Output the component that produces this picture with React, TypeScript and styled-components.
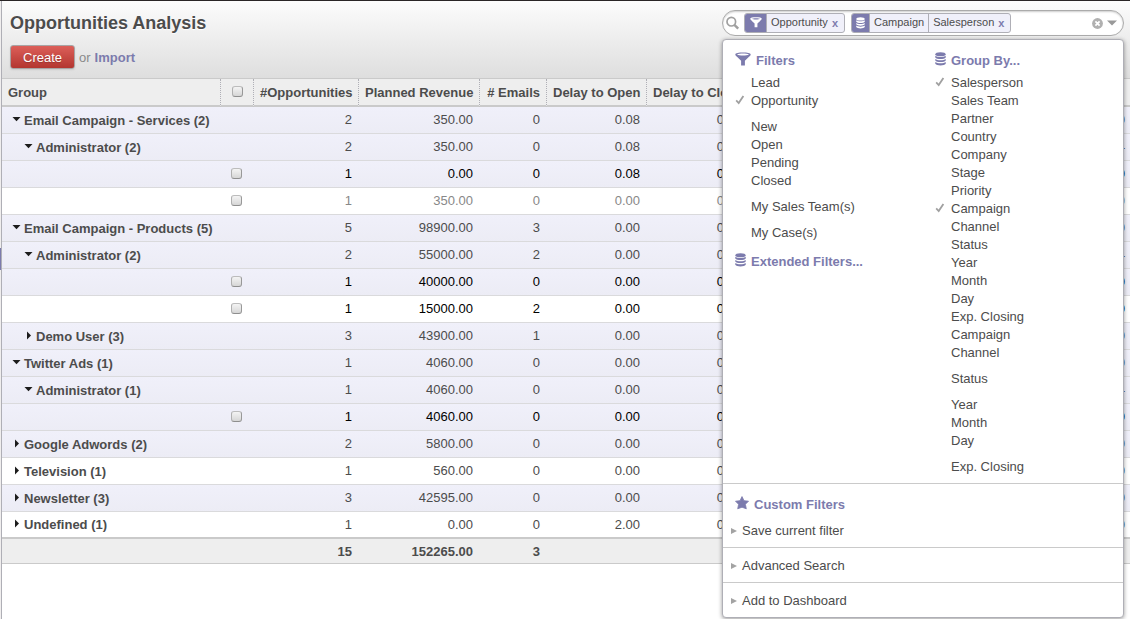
import React from "react";
import styled, { createGlobalStyle, css } from "styled-components";

const PURPLE = "#7c7bad";
const TEXT = "#4c4c4c";

const GlobalStyle = createGlobalStyle`
  *, *::before, *::after { box-sizing: border-box; }
  body {
    margin: 0;
    background: #fff;
    color: ${TEXT};
    font-family: "Liberation Sans", Arial, sans-serif;
    font-size: 13px;
    line-height: 18px;
  }
  button, input { font: inherit; color: inherit; }
  ul { list-style: none; margin: 0; padding: 0; }
`;

const Page = styled.div`
  display: flex;
  min-height: 100vh;
  border-top: 1px solid #2a2526;
`;

const Rail = styled.div`
  flex: none;
  width: 2px;
  padding-top: 247px;
  background: #f0eeee;
  border-right: 1px solid #afafb6;
`;

const RailMarker = styled.div`
  height: 22px;
  background: ${PURPLE};
`;

const Main = styled.main`
  flex: 1;
  min-width: 0;
`;

const Header = styled.header`
  display: flex;
  justify-content: space-between;
  height: 78px;
  padding: 0 6px 0 8px;
  background: linear-gradient(#fcfcfc, #dedede);
  border-bottom: 1px solid #cacaca;
`;

const Title = styled.h1`
  margin: 0;
  padding-top: 10px;
  font-size: 18px;
  line-height: 24px;
  text-shadow: 0 1px 1px #fff;
`;

const Actions = styled.div`
  display: flex;
  align-items: baseline;
  gap: 4px;
  margin-top: 10px;
  color: #8a8a8a;
`;

const CreateButton = styled.button`
  height: 24px;
  padding: 2px 12px 0;
  border: 1px solid #a8a4a4;
  border-radius: 3px;
  background: linear-gradient(#dc5f59, #b33630);
  box-shadow: 0 1px 2px rgba(0, 0, 0, 0.1);
  color: #fff;
  text-shadow: 0 1px 1px rgba(0, 0, 0, 0.2);
`;

const ImportLink = styled.a`
  color: ${PURPLE};
  font-weight: bold;
  text-decoration: none;
`;

const Search = styled.div`
  position: relative;
  width: 402px;
  padding-top: 9px;
`;

const SearchBox = styled.div`
  display: flex;
  align-items: center;
  height: 26px;
  padding: 0 6px 0 3px;
  border: 1px solid #ababab;
  border-radius: 13px;
  background: #fff;
  box-shadow: 0 1px 2px rgba(0, 0, 0, 0.2) inset;
`;

const Facet = styled.div`
  display: flex;
  height: 20px;
  margin-left: 6px;
  border: 1px solid #afafb6;
  border-radius: 3px;
  background: #f0f0fa;
  overflow: hidden;
  font-size: 11px;
  line-height: 17px;
`;

const FacetIcon = styled.span<{ $wide?: boolean }>`
  display: flex;
  align-items: center;
  justify-content: center;
  width: ${(p) => (p.$wide ? 21 : 17)}px;
  background: ${PURPLE};
  color: #fff;
`;

const FacetValue = styled.span`
  padding: 0 4px;
  border-left: 1px solid #afafb6;
`;

const FacetRemove = styled.button`
  padding: 0 6px 0 0;
  border: 0;
  background: none;
  color: ${PURPLE};
  font-weight: bold;
  line-height: 17px;
`;

const SearchInput = styled.input`
  flex: 1;
  min-width: 0;
  height: 20px;
  padding: 0 4px;
  border: 0;
  outline: 0;
  background: none;
`;

const IconButton = styled.button`
  display: flex;
  padding: 0;
  margin-left: 4px;
  border: 0;
  background: none;
`;

const Menu = styled.div`
  position: absolute;
  top: 38px;
  left: 0;
  right: 0;
  z-index: 2;
  border: 1px solid #afafb6;
  border-radius: 4px;
  background: #fff;
  box-shadow: 0 1px 4px rgba(0, 0, 0, 0.4);
`;

const MenuColumns = styled.div`
  display: grid;
  grid-template-columns: 1fr 1fr;
  padding: 12px 0 7px;
`;

const MenuColumn = styled.div`
  padding-left: 12px;
`;

const MenuTitle = styled.h3<{ $top?: number }>`
  display: flex;
  gap: 5px;
  margin: ${(p) => p.$top ?? 0}px 0 0;
  color: ${PURPLE};
  font-size: 13px;
  line-height: 18px;
`;

const MenuGroup = styled.ul<{ $first?: boolean }>`
  margin-top: ${(p) => (p.$first ? 4 : 8)}px;
`;

const MenuItem = styled.button`
  display: grid;
  grid-template-columns: 16px auto;
  align-items: center;
  padding: 0;
  border: 0;
  background: none;
  line-height: 18px;
  text-align: left;
`;

const MenuSection = styled.section`
  padding: 9px 0 7px 8px;
  border-top: 1px solid #cacaca;
`;

const CustomTitle = styled(MenuTitle)`
  margin: 3px 0 8px 4px;
`;

const Expander = styled.button`
  display: flex;
  align-items: center;
  gap: 5px;
  padding: 0;
  border: 0;
  background: none;
  line-height: 18px;

  &::before {
    content: "";
    border-left: 6px solid #a3a3a3;
    border-top: 3px solid transparent;
    border-bottom: 3px solid transparent;
  }
`;

const Table = styled.table`
  width: 100%;
  table-layout: fixed;
  border-spacing: 0;
`;

const Col = styled.col<{ $w?: number }>`
  width: ${(p) => (p.$w ? `${p.$w}px` : "auto")};
`;

const HeadCell = styled.th<{ $align?: string }>`
  height: 28px;
  padding: 2px 6px 0;
  border-bottom: 2px solid #cacaca;
  background: #eee;
  text-align: ${(p) => p.$align ?? "left"};
  white-space: nowrap;
  overflow: hidden;

  & + & { border-left: 1px dotted #afafb6; }
`;

type Tone = "normal" | "strong" | "muted";
const tones: Record<Tone, string> = { normal: TEXT, strong: "#000", muted: "#888" };

const Row = styled.tr<{ $tone: Tone; $plain?: boolean }>`
  color: ${(p) => tones[p.$tone]};
  background: ${(p) => (p.$plain ? "#fff" : "linear-gradient(#f0f0fa, #ececf5)")};

  &:last-child > * { height: 25px; border-bottom: 0; }
`;

const cell = css`
  height: 27px;
  border-bottom: 1px solid #dadadc;
  vertical-align: middle;
`;

const GroupCell = styled.th<{ $level: number }>`
  ${cell}
  padding: 1px 0 0 ${(p) => 10 + p.$level * 12}px;
  text-align: left;
`;

const GroupToggle = styled.button`
  display: flex;
  align-items: center;
  gap: 3px;
  padding: 0;
  border: 0;
  background: none;
  font-weight: bold;
  line-height: 18px;
`;

const CheckCell = styled.td`
  ${cell}
  padding: 0 0 2px;
`;

const Checkbox = styled.input.attrs({ type: "checkbox" })`
  appearance: none;
  display: block;
  width: 11px;
  height: 11px;
  margin: 0 auto;
  border: 1px solid #999;
  border-color: #bcbcbc #989898 #8e8e8e #b0b0b0;
  border-radius: 3px;
  background: linear-gradient(#f4f4f4, #d6d6d6);
`;

const HeadCheckbox = styled(Checkbox)`
  margin-bottom: 3px;
`;

const NumCell = styled.td`
  ${cell}
  padding: 0 6px;
  text-align: right;

  &:last-child { padding-right: 5px; }
`;

const FootCell = styled.td`
  height: 27px;
  padding: 2px 6px 0;
  border-top: 2px solid #cacaca;
  border-bottom: 1px solid #cacaca;
  background: #eee;
  font-weight: bold;
  text-align: right;
`;

const FunnelIcon = ({ size = 16 }: { size?: number }) => (
  <svg width={size} height={size} viewBox="0 0 16 16" aria-hidden="true">
    <path
      fill="currentColor"
      fillRule="evenodd"
      d="M.3 2.4C.3 1 4 .4 8 .4s7.700.6 7.700 2c0 1-1.200 1.800-2.200 2.800L9.900 8.800V13.600H6.100V8.800L2.500 5.200C1.500 4.200.3 3.400.3 2.400ZM2 2.400c1.200.7 3.400 1 6 1s4.800-.3 6-1c-1.200-.6-3.400-.9-6-.9s-4.800.3-6 .9Z"
    />
  </svg>
);

const StackIcon = ({ width = 11, height = 14 }: { width?: number; height?: number }) => (
  <svg width={width} height={height} viewBox="0 0 12 14" preserveAspectRatio="none" aria-hidden="true">
    <g fill="currentColor">
      <ellipse cx="6" cy="2.200" rx="5.600" ry="2" />
      <path d="M.3 3.700C2.400 5.400 9.600 5.400 11.700 3.700V5.500C10.200 7.500 1.800 7.500.3 5.500Z" />
      <path d="M.3 6.900C2.400 8.600 9.600 8.600 11.700 6.900V8.600C10.200 10.600 1.800 10.600.3 8.600Z" />
      <path d="M.3 10C2.400 11.700 9.600 11.700 11.700 10V11.800C10.200 14 1.800 14 .3 11.800Z" />
    </g>
  </svg>
);

const StarIcon = () => (
  <svg width="14" height="14" viewBox="0 0 14 14" aria-hidden="true">
    <path
      d="M7 .6 9 4.700 13.500 5.200 10.400 8.300 11.300 12.800 7 11.200 2.700 12.800 3.600 8.300.5 5.200 5 4.700Z"
      fill="currentColor"
      stroke="currentColor"
      strokeWidth=".8"
      strokeLinejoin="round"
    />
  </svg>
);

const CheckIcon = () => (
  <svg width="10" height="10" viewBox="0 0 10 10" aria-hidden="true">
    <path d="M1.200 5.400 3.700 8 8.400 1" fill="none" stroke="#a0a0a0" strokeWidth="1.800" />
  </svg>
);

const LensIcon = () => (
  <svg width="12" height="14" viewBox="0 0 12 14" overflow="visible" aria-hidden="true">
    <circle cx="5.300" cy="5.700" r="4.300" fill="none" stroke="#a0a0a0" strokeWidth="1.700" />
    <path d="M8.400 8.800 12.200 12.700" stroke="#a0a0a0" strokeWidth="2.400" />
  </svg>
);

const ClearIcon = () => (
  <svg width="11" height="11" viewBox="0 0 11 11" aria-hidden="true">
    <circle cx="5.500" cy="5.500" r="5.400" fill="#b0b0b0" />
    <path d="M3.400 3.400 7.600 7.600M7.600 3.400 3.400 7.600" stroke="#fff" strokeWidth="1.700" />
  </svg>
);

const DropIcon = () => (
  <svg width="10" height="6" viewBox="0 0 10 6" aria-hidden="true">
    <path d="M0 .5H10L5 5.500Z" fill="#999" />
  </svg>
);

const ToggleIcon = ({ open }: { open: boolean }) => (
  <svg width="9" height="12" viewBox="0 0 9 12" aria-hidden="true">
    <path d={open ? "M.5 2H8.500L4.500 6.200Z" : "M3 .5 7 4.500 3 8.500Z"} fill="#1c1c1c" />
  </svg>
);

interface DataRow {
  label?: string;
  level?: number;
  open?: boolean;
  tone?: Tone;
  plain?: boolean;
  values: string[];
}

const rows: DataRow[] = [
  { label: "Email Campaign - Services (2)", open: true, values: ["2", "350.00", "0", "0.08", "0.00", "0.00"] },
  { label: "Administrator (2)", level: 1, open: true, values: ["2", "350.00", "0", "0.08", "0.00", "0.04"] },
  { tone: "strong", values: ["1", "0.00", "0", "0.08", "0.00", "0.00"] },
  { tone: "muted", plain: true, values: ["1", "350.00", "0", "0.00", "0.00", "0.00"] },
  { label: "Email Campaign - Products (5)", open: true, values: ["5", "98900.00", "3", "0.00", "0.00", "0.00"] },
  { label: "Administrator (2)", level: 1, open: true, values: ["2", "55000.00", "2", "0.00", "0.00", "0.04"] },
  { tone: "strong", values: ["1", "40000.00", "0", "0.00", "0.00", "0.00"] },
  { tone: "strong", plain: true, values: ["1", "15000.00", "2", "0.00", "0.00", "0.00"] },
  { label: "Demo User (3)", level: 1, values: ["3", "43900.00", "1", "0.00", "0.00", "0.00"] },
  { label: "Twitter Ads (1)", open: true, values: ["1", "4060.00", "0", "0.00", "0.00", "0.00"] },
  { label: "Administrator (1)", level: 1, open: true, values: ["1", "4060.00", "0", "0.00", "0.00", "0.04"] },
  { tone: "strong", values: ["1", "4060.00", "0", "0.00", "0.00", "0.00"] },
  { label: "Google Adwords (2)", values: ["2", "5800.00", "0", "0.00", "0.00", "0.00"] },
  { label: "Television (1)", plain: true, values: ["1", "560.00", "0", "0.00", "0.00", "0.00"] },
  { label: "Newsletter (3)", values: ["3", "42595.00", "0", "0.00", "0.00", "0.00"] },
  { label: "Undefined (1)", plain: true, values: ["1", "0.00", "0", "2.00", "0.00", "0.00"] },
];

const filterGroups = [["Lead", "Opportunity"], ["New", "Open", "Pending", "Closed"], ["My Sales Team(s)"], ["My Case(s)"]];

const groupByGroups = [
  [
    "Salesperson", "Sales Team", "Partner", "Country", "Company", "Stage", "Priority", "Campaign",
    "Channel", "Status", "Year", "Month", "Day", "Exp. Closing", "Campaign", "Channel",
  ],
  ["Status"],
  ["Year", "Month", "Day"],
  ["Exp. Closing"],
];

const MenuGroups = ({ groups, checked }: { groups: string[][]; checked: number[] }) => (
  <>
    {groups.map((items, g) => (
      <MenuGroup key={g} $first={g === 0}>
        {items.map((item, i) => {
          const on = g === 0 && checked.includes(i);
          return (
            <li key={i}>
              <MenuItem type="button" aria-pressed={on}>
                <span>{on && <CheckIcon />}</span>
                {item}
              </MenuItem>
            </li>
          );
        })}
      </MenuGroup>
    ))}
  </>
);

const SearchMenu = () => (
  <Menu>
    <MenuColumns>
      <MenuColumn>
        <MenuTitle><FunnelIcon />Filters</MenuTitle>
        <MenuGroups groups={filterGroups} checked={[1]} />
        <MenuTitle $top={11}><StackIcon />Extended Filters...</MenuTitle>
      </MenuColumn>
      <MenuColumn>
        <MenuTitle><StackIcon />Group By...</MenuTitle>
        <MenuGroups groups={groupByGroups} checked={[0, 7]} />
      </MenuColumn>
    </MenuColumns>
    <MenuSection>
      <CustomTitle><StarIcon />Custom Filters</CustomTitle>
      <Expander type="button">Save current filter</Expander>
    </MenuSection>
    <MenuSection><Expander type="button">Advanced Search</Expander></MenuSection>
    <MenuSection><Expander type="button">Add to Dashboard</Expander></MenuSection>
  </Menu>
);

export default function App() {
  return (
    <>
      <GlobalStyle />
      <Page>
        <Rail><RailMarker /></Rail>
        <Main>
          <Header>
            <div>
              <Title>Opportunities Analysis</Title>
              <Actions>
                <CreateButton type="button">Create</CreateButton>
                <span>or</span>
                <ImportLink href="#import">Import</ImportLink>
              </Actions>
            </div>
            <Search>
              <SearchBox>
                <LensIcon />
                <Facet>
                  <FacetIcon $wide><FunnelIcon size={12} /></FacetIcon>
                  <FacetValue>Opportunity</FacetValue>
                  <FacetRemove type="button" aria-label="Remove Opportunity">x</FacetRemove>
                </Facet>
                <Facet>
                  <FacetIcon><StackIcon width={9} height={12} /></FacetIcon>
                  <FacetValue>Campaign</FacetValue>
                  <FacetValue>Salesperson</FacetValue>
                  <FacetRemove type="button" aria-label="Remove grouping">x</FacetRemove>
                </Facet>
                <SearchInput type="text" aria-label="Search" />
                <IconButton type="button" aria-label="Clear"><ClearIcon /></IconButton>
                <IconButton type="button" aria-label="Toggle search menu"><DropIcon /></IconButton>
              </SearchBox>
              <SearchMenu />
            </Search>
          </Header>
          <Table>
            <colgroup>
              <Col $w={218} />
              <Col $w={33} />
              <Col $w={105} />
              <Col $w={121} />
              <Col $w={67} />
              <Col $w={100} />
              <Col $w={102} />
              <Col />
            </colgroup>
            <thead>
              <tr>
                <HeadCell>Group</HeadCell>
                <HeadCell><HeadCheckbox aria-label="Select all" /></HeadCell>
                <HeadCell $align="right">#Opportunities</HeadCell>
                <HeadCell $align="right">Planned Revenue</HeadCell>
                <HeadCell $align="right"># Emails</HeadCell>
                <HeadCell $align="right">Delay to Open</HeadCell>
                <HeadCell $align="right">Delay to Close</HeadCell>
                <HeadCell />
              </tr>
            </thead>
            <tbody>
              {rows.map((row, i) => (
                <Row key={i} $tone={row.tone ?? "normal"} $plain={row.plain}>
                  <GroupCell $level={row.level ?? 0} scope="row">
                    {row.label && (
                      <GroupToggle type="button" aria-expanded={!!row.open}>
                        <ToggleIcon open={!!row.open} />
                        {row.label}
                      </GroupToggle>
                    )}
                  </GroupCell>
                  <CheckCell>{!row.label && <Checkbox aria-label={`Select row ${i + 1}`} />}</CheckCell>
                  {row.values.map((value, v) => (
                    <NumCell key={v}>{value}</NumCell>
                  ))}
                </Row>
              ))}
            </tbody>
            <tfoot>
              <tr>
                <FootCell />
                <FootCell />
                <FootCell>15</FootCell>
                <FootCell>152265.00</FootCell>
                <FootCell>3</FootCell>
                <FootCell />
                <FootCell />
                <FootCell />
              </tr>
            </tfoot>
          </Table>
        </Main>
      </Page>
    </>
  );
}
